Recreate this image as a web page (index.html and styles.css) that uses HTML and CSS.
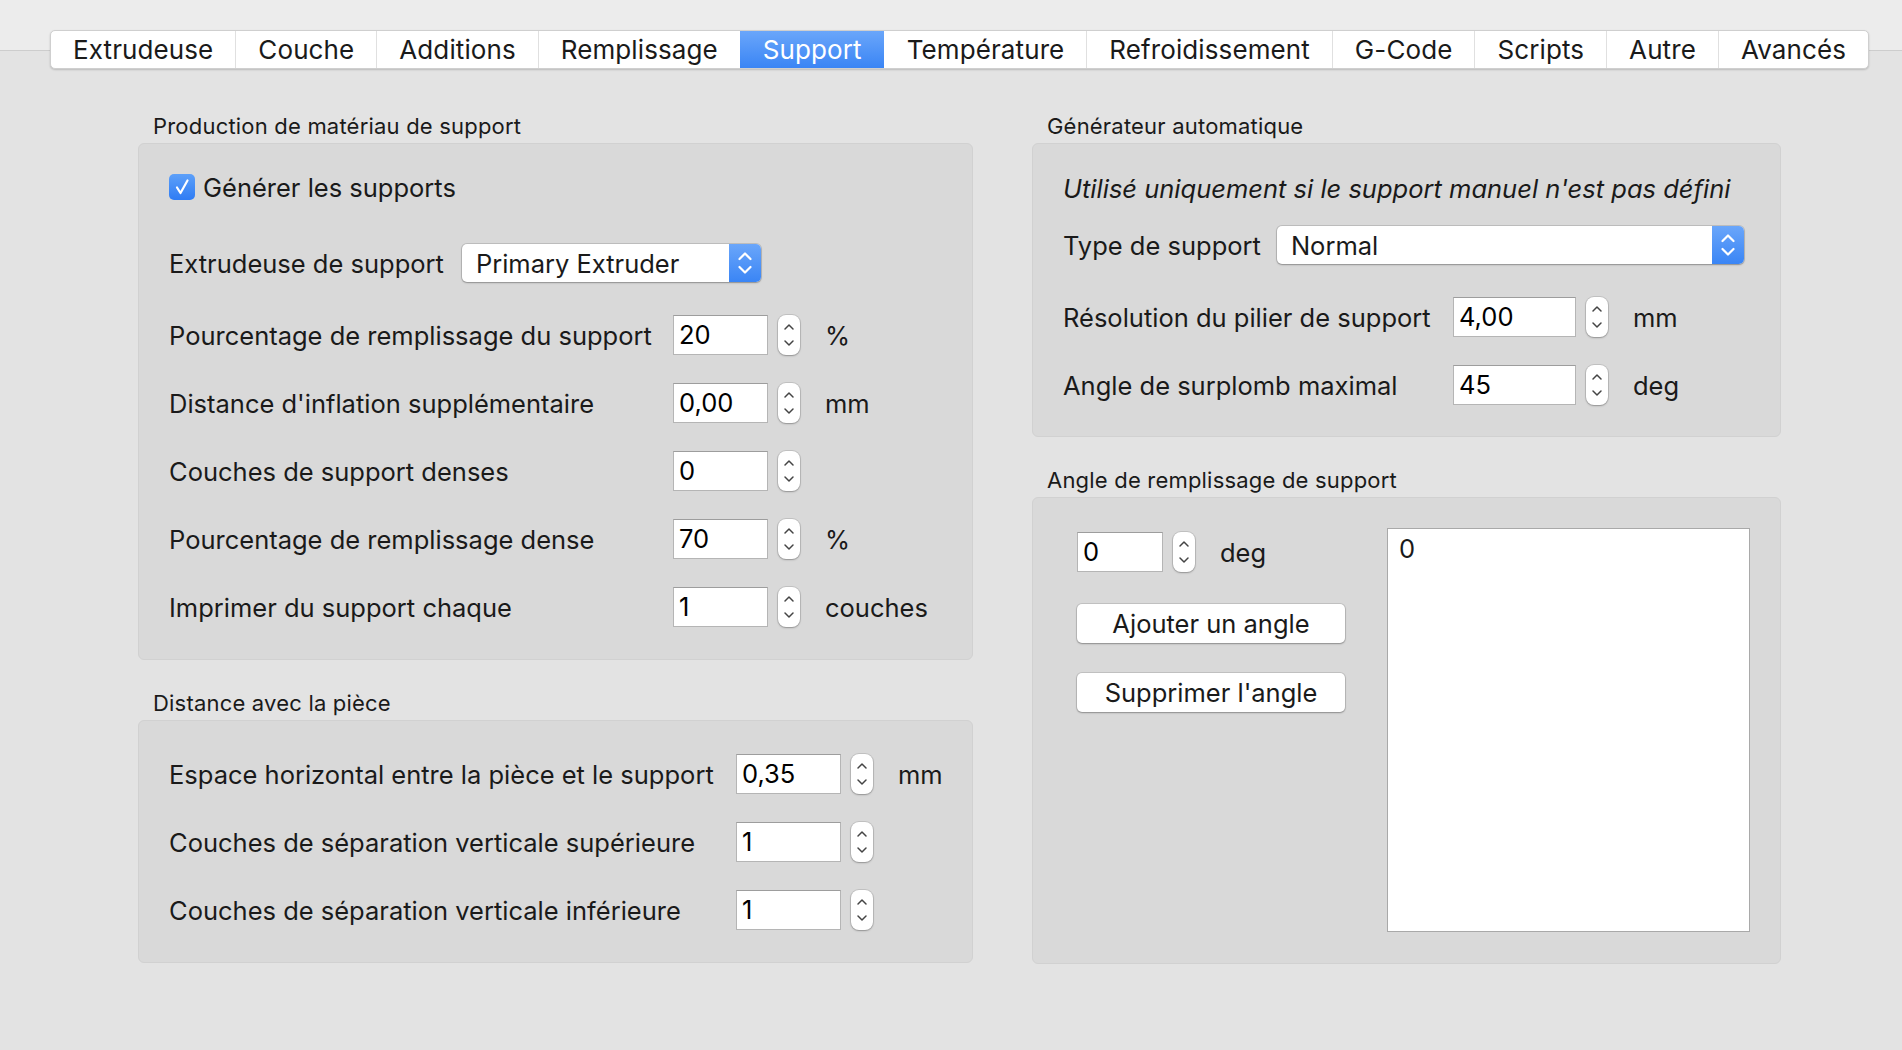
FILE: index.html
```html
<!DOCTYPE html>
<html lang="fr">
<head>
    <meta charset="UTF-8">
    <title>Support</title>
    <link rel="stylesheet" href="styles.css">
</head>
<body>
    <div class="tabs">
        <div class="tab">Extrudeuse</div>
        <div class="tab">Couche</div>
        <div class="tab">Additions</div>
        <div class="tab">Remplissage</div>
        <div class="tab active">Support</div>
        <div class="tab">Température</div>
        <div class="tab">Refroidissement</div>
        <div class="tab">G-Code</div>
        <div class="tab">Scripts</div>
        <div class="tab">Autre</div>
        <div class="tab">Avancés</div>
    </div>

    <main class="columns">
        <section class="col col-left">
            <div class="group-title">Production de matériau de support</div>
            <div class="panel panel-production">
                <div class="check-row">
                    <span class="checkbox">
                        <svg viewBox="0 0 26 26" width="26" height="26"><path d="M8 13.5 L11.5 19 L18.5 6.5" fill="none" stroke="#fff" stroke-width="2.2" stroke-linecap="round" stroke-linejoin="round"/></svg>
                    </span>
                    <span>Générer les supports</span>
                </div>
                <div class="popup-row">
                    <span>Extrudeuse de support</span>
                    <div class="popup popup-extruder">
                        <span class="popup-value">Primary Extruder</span>
                        <span class="popup-arrows">
                            <svg viewBox="0 0 32 38" width="32" height="38"><path d="M10.5 15 L16 9.5 L21.5 15 M10.5 23 L16 28.5 L21.5 23" fill="none" stroke="#fff" stroke-width="2.2" stroke-linecap="round" stroke-linejoin="round"/></svg>
                        </span>
                    </div>
                </div>
                <div class="spin-row">
                    <span>Pourcentage de remplissage du support</span>
                    <span class="field">20</span>
                    <span class="stepper"><svg viewBox="0 0 22 40" width="22" height="40"><path d="M7 14 L11 10 L15 14 M7 26 L11 30 L15 26" fill="none" stroke="#444" stroke-width="1.5" stroke-linecap="round" stroke-linejoin="round"/></svg></span>
                    <span class="unit">%</span>
                </div>
                <div class="spin-row">
                    <span>Distance d'inflation supplémentaire</span>
                    <span class="field">0,00</span>
                    <span class="stepper"><svg viewBox="0 0 22 40" width="22" height="40"><path d="M7 14 L11 10 L15 14 M7 26 L11 30 L15 26" fill="none" stroke="#444" stroke-width="1.5" stroke-linecap="round" stroke-linejoin="round"/></svg></span>
                    <span class="unit">mm</span>
                </div>
                <div class="spin-row">
                    <span>Couches de support denses</span>
                    <span class="field">0</span>
                    <span class="stepper"><svg viewBox="0 0 22 40" width="22" height="40"><path d="M7 14 L11 10 L15 14 M7 26 L11 30 L15 26" fill="none" stroke="#444" stroke-width="1.5" stroke-linecap="round" stroke-linejoin="round"/></svg></span>
                    <span class="unit"></span>
                </div>
                <div class="spin-row">
                    <span>Pourcentage de remplissage dense</span>
                    <span class="field">70</span>
                    <span class="stepper"><svg viewBox="0 0 22 40" width="22" height="40"><path d="M7 14 L11 10 L15 14 M7 26 L11 30 L15 26" fill="none" stroke="#444" stroke-width="1.5" stroke-linecap="round" stroke-linejoin="round"/></svg></span>
                    <span class="unit">%</span>
                </div>
                <div class="spin-row">
                    <span>Imprimer du support chaque</span>
                    <span class="field">1</span>
                    <span class="stepper"><svg viewBox="0 0 22 40" width="22" height="40"><path d="M7 14 L11 10 L15 14 M7 26 L11 30 L15 26" fill="none" stroke="#444" stroke-width="1.5" stroke-linecap="round" stroke-linejoin="round"/></svg></span>
                    <span class="unit">couches</span>
                </div>
            </div>

            <div class="group-title">Distance avec la pièce</div>
            <div class="panel panel-distance">
                <div class="spin-row">
                    <span>Espace horizontal entre la pièce et le support</span>
                    <span class="field">0,35</span>
                    <span class="stepper"><svg viewBox="0 0 22 40" width="22" height="40"><path d="M7 14 L11 10 L15 14 M7 26 L11 30 L15 26" fill="none" stroke="#444" stroke-width="1.5" stroke-linecap="round" stroke-linejoin="round"/></svg></span>
                    <span class="unit">mm</span>
                </div>
                <div class="spin-row">
                    <span>Couches de séparation verticale supérieure</span>
                    <span class="field">1</span>
                    <span class="stepper"><svg viewBox="0 0 22 40" width="22" height="40"><path d="M7 14 L11 10 L15 14 M7 26 L11 30 L15 26" fill="none" stroke="#444" stroke-width="1.5" stroke-linecap="round" stroke-linejoin="round"/></svg></span>
                    <span class="unit"></span>
                </div>
                <div class="spin-row">
                    <span>Couches de séparation verticale inférieure</span>
                    <span class="field">1</span>
                    <span class="stepper"><svg viewBox="0 0 22 40" width="22" height="40"><path d="M7 14 L11 10 L15 14 M7 26 L11 30 L15 26" fill="none" stroke="#444" stroke-width="1.5" stroke-linecap="round" stroke-linejoin="round"/></svg></span>
                    <span class="unit"></span>
                </div>
            </div>
        </section>

        <section class="col col-right">
            <div class="group-title">Générateur automatique</div>
            <div class="panel panel-auto">
                <div class="note">Utilisé uniquement si le support manuel n'est pas défini</div>
                <div class="popup-row">
                    <span>Type de support</span>
                    <div class="popup popup-type">
                        <span class="popup-value">Normal</span>
                        <span class="popup-arrows">
                            <svg viewBox="0 0 32 38" width="32" height="38"><path d="M10.5 15 L16 9.5 L21.5 15 M10.5 23 L16 28.5 L21.5 23" fill="none" stroke="#fff" stroke-width="2.2" stroke-linecap="round" stroke-linejoin="round"/></svg>
                        </span>
                    </div>
                </div>
                <div class="spin-row">
                    <span>Résolution du pilier de support</span>
                    <span class="field">4,00</span>
                    <span class="stepper"><svg viewBox="0 0 22 40" width="22" height="40"><path d="M7 14 L11 10 L15 14 M7 26 L11 30 L15 26" fill="none" stroke="#444" stroke-width="1.5" stroke-linecap="round" stroke-linejoin="round"/></svg></span>
                    <span class="unit">mm</span>
                </div>
                <div class="spin-row">
                    <span>Angle de surplomb maximal</span>
                    <span class="field">45</span>
                    <span class="stepper"><svg viewBox="0 0 22 40" width="22" height="40"><path d="M7 14 L11 10 L15 14 M7 26 L11 30 L15 26" fill="none" stroke="#444" stroke-width="1.5" stroke-linecap="round" stroke-linejoin="round"/></svg></span>
                    <span class="unit">deg</span>
                </div>
            </div>

            <div class="group-title">Angle de remplissage de support</div>
            <div class="panel panel-angle">
                <div class="angle-controls">
                    <div class="spin-row">
                        <span class="field">0</span>
                        <span class="stepper"><svg viewBox="0 0 22 40" width="22" height="40"><path d="M7 14 L11 10 L15 14 M7 26 L11 30 L15 26" fill="none" stroke="#444" stroke-width="1.5" stroke-linecap="round" stroke-linejoin="round"/></svg></span>
                        <span class="unit">deg</span>
                    </div>
                    <button class="btn">Ajouter un angle</button>
                    <button class="btn">Supprimer l'angle</button>
                </div>
                <div class="angle-list">
                    <div class="list-item">0</div>
                </div>
            </div>
        </section>
    </main>
</body>
</html>
```

FILE: styles.css
```css
html, body {
    margin: 0;
}
body {
    font-family: 'Inter', 'Liberation Sans', sans-serif;
    font-size: 25.5px;
    color: #1a1a1a;
    min-height: 100vh;
    background-color: #e3e3e3;
    background-image: linear-gradient(to bottom, #ececec 0, #ececec 50px, #cdcdcd 50px, #cdcdcd 51px, #e3e3e3 51px);
    background-repeat: no-repeat;
    background-size: 100% 60px;
}

/* tab strip */
.tabs {
    display: flex;
    width: max-content;
    margin: 30px 0 0 50px;
    height: 39px;
    background: #fff;
    border: 1px solid #cfcfcf;
    border-radius: 5px;
    box-shadow: 0 1px 2px rgba(0, 0, 0, 0.18);
    box-sizing: border-box;
    overflow: hidden;
    font-size: 26px;
    white-space: nowrap;
}
.tab {
    flex-shrink: 0;
    padding: 0 22px;
    line-height: 37px;
    border-left: 1px solid #e0e0e0;
    letter-spacing: 0.1px;
}
.tab:first-child {
    border-left: none;
}
.tab.active {
    color: #fff;
    border-left-color: transparent;
    background: linear-gradient(to bottom, #6aa6fa, #3a85f5);
}
.tab.active + .tab {
    border-left-color: transparent;
}

/* columns */
.columns {
    display: flex;
    gap: 59px;
    padding: 44px 0 0 138px;
}
.col-left {
    width: 835px;
}
.col-right {
    width: 749px;
}
.group-title {
    font-size: 22px;
    letter-spacing: 0.2px;
    line-height: 26px;
    margin: 0 0 4px 15px;
}
.panel {
    display: flex;
    flex-direction: column;
    gap: 24px;
    background: #d9d9d9;
    border: 1px solid #d1d1d1;
    border-radius: 6px;
    margin-bottom: 30px;
}
.panel-production {
    padding: 21px 30px 30px;
}
.panel-distance {
    padding: 31px 30px 30px;
}
.panel-auto {
    padding: 22px 30px 29px;
}

/* rows */
.check-row,
.popup-row,
.note {
    display: flex;
    align-items: center;
    height: 44px;
}
.check-row {
    gap: 8px;
    margin-bottom: 8px;
}
.popup-row {
    margin-bottom: 4px;
}
.note {
    font-style: italic;
    margin-bottom: -11px;
}
.checkbox {
    width: 26px;
    height: 26px;
    border-radius: 5px;
    background: linear-gradient(to bottom, #5da0f9, #2f7cf4);
    display: flex;
}

.popup {
    display: flex;
    height: 38px;
    background: #fff;
    border-radius: 5px;
    box-shadow: 0 0 0 1px rgba(0, 0, 0, 0.12), 0 1px 2px rgba(0, 0, 0, 0.25);
    overflow: hidden;
}
.popup-extruder {
    width: 299px;
    margin-left: 18px;
}
.popup-type {
    width: 467px;
    margin-left: 16px;
}
.popup-value {
    flex: 1;
    padding-left: 14px;
    line-height: 40px;
}
.popup-arrows {
    width: 32px;
    display: flex;
    background: linear-gradient(to bottom, #6aa6fa, #3a85f5);
}

.spin-row {
    display: grid;
    align-items: center;
    height: 44px;
}
.panel-production .spin-row {
    grid-template-columns: 504px 95px auto 1fr;
}
.panel-distance .spin-row {
    grid-template-columns: 567px 105px auto 1fr;
}
.panel-auto .spin-row {
    grid-template-columns: 390px 123px auto 1fr;
}
.angle-controls .spin-row {
    grid-template-columns: 86px auto 1fr;
}
.field {
    height: 40px;
    box-sizing: border-box;
    background: #fff;
    color: #000;
    border: 1px solid #b5b5b5;
    border-top-color: #9d9d9d;
    padding-left: 5px;
    line-height: 38px;
}
.stepper {
    width: 22px;
    height: 40px;
    margin: 0 10px;
    background: #fff;
    border-radius: 8px;
    box-shadow: 0 0 0 1px rgba(0, 0, 0, 0.1), 0 1px 2px rgba(0, 0, 0, 0.25);
    display: flex;
}
.unit {
    margin-left: 15px;
}

/* angle panel */
.panel-angle {
    flex-direction: row;
    gap: 0;
    padding: 30px 30px 31px 44px;
}
.angle-controls {
    width: 268px;
    display: flex;
    flex-direction: column;
    gap: 30px;
    padding-top: 2px;
}
.btn {
    height: 39px;
    font: inherit;
    color: inherit;
    background: #fff;
    border: none;
    border-radius: 5px;
    box-shadow: 0 0 0 1px rgba(0, 0, 0, 0.1), 0 1px 2px rgba(0, 0, 0, 0.28);
    padding: 0;
}
.angle-list {
    width: 363px;
    height: 404px;
    box-sizing: border-box;
    margin-left: auto;
    background: #fff;
    border: 1px solid #a9a9a9;
}
.list-item {
    padding: 4px 11px;
}
```
